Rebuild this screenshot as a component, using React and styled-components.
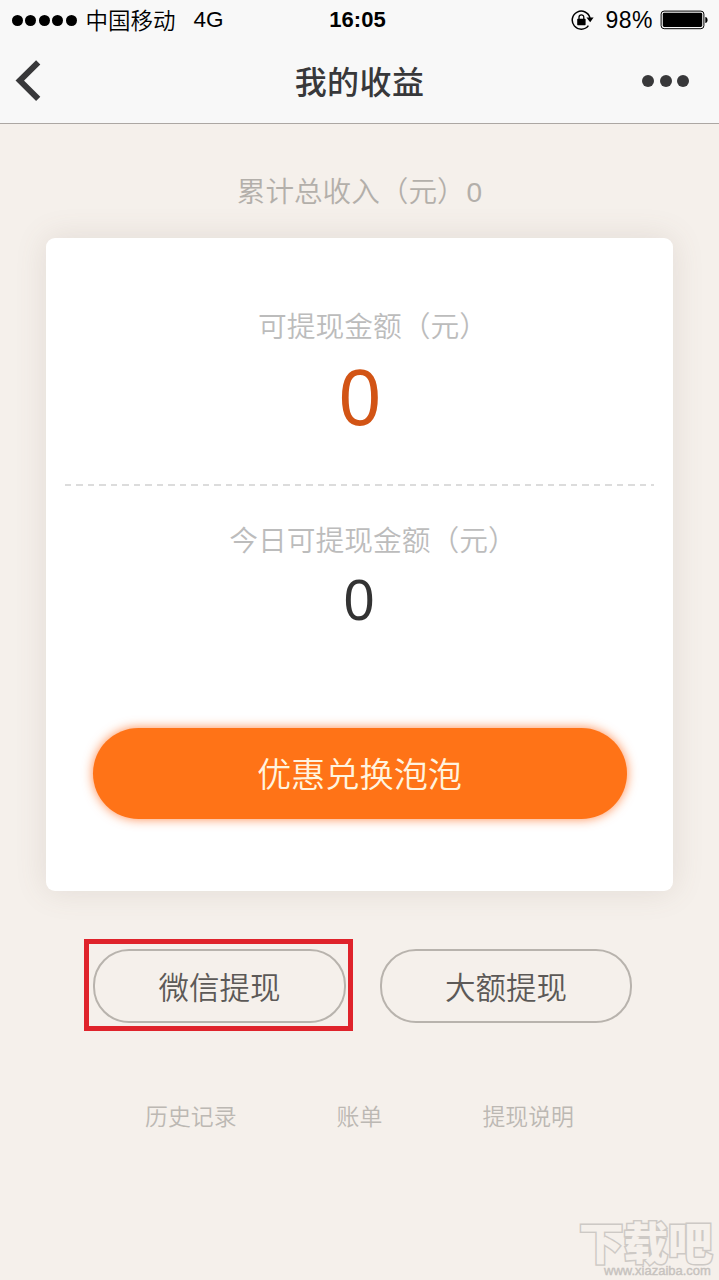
import styled, { createGlobalStyle } from "styled-components";

const latin = `"Liberation Sans", "Noto Sans CJK SC", sans-serif`;
const cjk = `"Noto Sans CJK SC", sans-serif`;

const GlobalStyle = createGlobalStyle`
  * {
    box-sizing: border-box;
  }
  body {
    margin: 0;
    background: #f5f0eb;
    font-family: ${latin};
    -webkit-font-smoothing: antialiased;
  }
`;

export default function App() {
  return (
    <Page>
      <GlobalStyle />
      <Header>
        <StatusBar>
          <StatusSide>
            <Signal>
              {[0, 1, 2, 3, 4].map((i) => (
                <SignalDot key={i} />
              ))}
            </Signal>
            <Carrier>中国移动</Carrier>
            <Network>4G</Network>
          </StatusSide>
          <Clock>16:05</Clock>
          <StatusSide $end>
            <LockIcon />
            <Percent>98%</Percent>
            <BatteryIcon />
          </StatusSide>
        </StatusBar>
        <NavBar>
          <BackIcon />
          <Title>我的收益</Title>
          <More>
            <MoreDot />
            <MoreDot />
            <MoreDot />
          </More>
        </NavBar>
      </Header>

      <Total>
        累计总收入（元）<TotalValue>0</TotalValue>
      </Total>

      <Card>
        <Label>可提现金额（元）</Label>
        <Amount $size={79} $height={90} $color="#d25415">0</Amount>
        <Divider />
        <Label>今日可提现金额（元）</Label>
        <Amount $size={58} $height={66} $color="#333333">0</Amount>
        <PrimaryButton>优惠兑换泡泡</PrimaryButton>
      </Card>

      <Actions>
        <Highlight>
          <OutlineButton>微信提现</OutlineButton>
        </Highlight>
        <OutlineButton>大额提现</OutlineButton>
      </Actions>

      <Links>
        <FooterLink>历史记录</FooterLink>
        <FooterLink>账单</FooterLink>
        <FooterLink>提现说明</FooterLink>
      </Links>

      <Watermark>
        <WatermarkName>下载吧</WatermarkName>
        <WatermarkUrl>www.xiazaiba.com</WatermarkUrl>
      </Watermark>
    </Page>
  );
}

function LockIcon() {
  return (
    <svg width="23" height="22" viewBox="0 0 23 22" fill="none">
      <path d="M17.4 16.6A9 9 0 1 1 19 9" stroke="#000" strokeWidth="1.5" />
      <path d="M15.4 8.6h7.200l-3.4 4.6z" fill="#000" />
      <rect x="6.200" y="9.8" width="8.4" height="6.4" rx="0.6" fill="#000" />
      <path d="M8 10V8.2a2.4 2.4 0 0 1 4.8 0V10" stroke="#000" strokeWidth="1.3" />
    </svg>
  );
}

function BatteryIcon() {
  return (
    <svg width="48" height="20" viewBox="0 0 48 20" fill="none">
      <rect x="1.1" y="1.1" width="42.8" height="17.6" rx="3" stroke="#000" strokeWidth="1" />
      <rect x="2.8" y="2.8" width="39.4" height="14.2" rx="1.4" fill="#000" />
      <path d="M45.3 7c1.5.3 2.3 1.4 2.3 3s-.8 2.7-2.3 3z" fill="#000" />
    </svg>
  );
}

function BackIcon() {
  return (
    <svg width="26" height="42" viewBox="0 0 26 42" fill="none">
      <path d="M23.2 2.4L4.8 20.6l18.4 18.2" stroke="#38383a" strokeWidth="6" />
    </svg>
  );
}

const Page = styled.main`
  display: flex;
  flex-direction: column;
  position: relative;
  width: 719px;
  height: 1280px;
  overflow: hidden;
  background: #f5f0eb;
`;

const Header = styled.header`
  height: 124px;
  background: #f8f8f8;
  border-bottom: 1px solid #aca7a3;
`;

const StatusBar = styled.div`
  display: grid;
  grid-template-columns: 1fr auto 1fr;
  align-items: center;
  height: 40px;
  padding: 0 11px 0 12px;
  color: #000;
`;

const StatusSide = styled.div`
  display: flex;
  align-items: center;
  justify-content: ${({ $end }) => ($end ? "flex-end" : "flex-start")};
`;

const Signal = styled.div`
  display: flex;
  gap: 2.4px;
`;

const SignalDot = styled.span`
  width: 11px;
  height: 11px;
  border-radius: 50%;
  background: #000;
`;

const Carrier = styled.span`
  margin-left: 9px;
  padding-bottom: 2px;
  font: 350 22.5px/30px ${cjk};
`;

const Network = styled.span`
  margin-left: 18px;
  font-size: 22.5px;
`;

const Clock = styled.span`
  margin-right: 5px;
  font-size: 22px;
  font-weight: 700;
`;

const Percent = styled.span`
  margin: 0 7px 0 11px;
  font-size: 23px;
  letter-spacing: 0.5px;
`;

const NavBar = styled.nav`
  display: grid;
  grid-template-columns: 1fr auto 1fr;
  align-items: center;
  height: 81px;
  padding: 0 30px 0 15px;
`;

const Title = styled.h1`
  margin: 0 0 2px 15px;
  font: 500 32px/40px ${cjk};
  letter-spacing: 0.4px;
  color: #38383a;
`;

const More = styled.div`
  display: flex;
  justify-content: flex-end;
  gap: 5.5px;
`;

const MoreDot = styled.span`
  width: 12px;
  height: 12px;
  border-radius: 50%;
  background: #38383a;
`;

const Total = styled.p`
  margin: 46px 0 28px;
  height: 40px;
  text-align: center;
  font: 350 28.6px/40px ${cjk};
  color: #b3afaa;
`;

const TotalValue = styled.span`
  margin-left: 1px;
  font-family: ${latin};
  font-size: 28px;
`;

const Card = styled.section`
  display: flex;
  flex-direction: column;
  align-items: center;
  flex: none;
  width: 627px;
  height: 653px;
  margin-left: 46px;
  padding-top: 67px;
  border-radius: 9px;
  background: #fff;
  box-shadow: 0 0 32px rgba(110, 90, 80, 0.14);
`;

const Label = styled.div`
  padding-left: 27px;
  font: 350 28.75px/40px ${cjk};
  color: #bcbcbc;
`;

const Amount = styled.div`
  height: ${({ $height }) => $height}px;
  margin-top: 8px;
  font-size: ${({ $size }) => $size}px;
  line-height: ${({ $height }) => $height}px;
  color: ${({ $color }) => $color};
  transform: scaleX(0.95);
`;

const Divider = styled.div`
  width: 589px;
  height: 2px;
  margin: 41px 0 33px;
  background: repeating-linear-gradient(90deg, #dcdcdc 0 6.5px, transparent 6.5px 11.5px);
`;

const PrimaryButton = styled.button`
  width: 534px;
  height: 91px;
  margin-top: 95px;
  padding: 0 0 2px;
  border: 0;
  border-radius: 46px;
  background: #ff7317;
  box-shadow: 0 0 11px rgba(255, 100, 20, 0.75);
  font: 350 34.2px/89px ${cjk};
  color: #fff3df;
`;

const Actions = styled.div`
  display: flex;
  align-items: flex-start;
  gap: 27px;
  margin: 48px 0 0 84px;

  > button {
    width: 252px;
    margin-top: 10px;
  }
`;

const Highlight = styled.div`
  width: 269px;
  height: 92px;
  padding: 5px 4px;
  border: 5px solid #df232b;
`;

const OutlineButton = styled.button`
  width: 253px;
  height: 74px;
  padding: 0;
  border: 2px solid #b8b3ad;
  border-radius: 36px;
  background: transparent;
  font: 350 30.5px/40px ${cjk};
  color: #5c5957;
`;

const Links = styled.footer`
  display: flex;
  justify-content: space-between;
  margin: 64px 145px 0;
`;

const FooterLink = styled.a`
  font: 350 22.9px/40px ${cjk};
  color: #bcb8b3;
`;

/* site mark laid over the bottom right corner */
const Watermark = styled.div`
  position: absolute;
  right: 6px;
  bottom: 3px;
  width: 134px;
`;

const WatermarkName = styled.div`
  height: 45px;
  font: 900 44.5px/45px ${cjk};
  white-space: nowrap;
  color: #f5f0eb;
  -webkit-text-stroke: 3px #cdc9c5;
  paint-order: stroke fill;
`;

const WatermarkUrl = styled.div`
  margin: 1px 0 0 25px;
  font-size: 13px;
  line-height: 13px;
  color: #c6c2be;
  -webkit-text-stroke: 0.4px #c6c2be;
`;
